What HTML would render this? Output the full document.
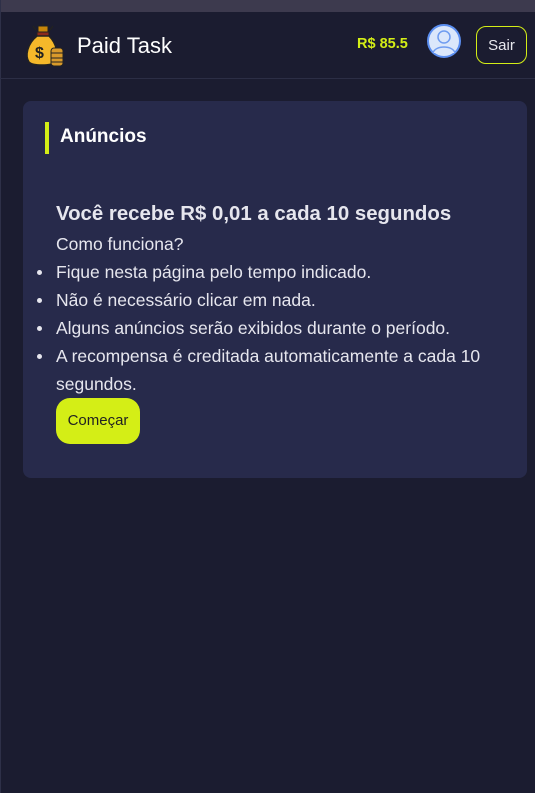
<!DOCTYPE html>
<html><head><meta charset="utf-8"><style>
*{box-sizing:border-box;margin:0;padding:0}
body{width:535px;height:793px;background:#1b1c30;font-family:"Liberation Sans",sans-serif;position:relative;overflow:hidden}
.lb{position:absolute;left:0;top:0;width:1px;height:793px;background:#2e3048}
.top{position:absolute;left:0;top:0;width:535px;height:12px;background:#3d3a4e}
.hdr{position:absolute;left:0;top:12px;width:535px;height:67px;border-bottom:1px solid #2c2e45}
.title{position:absolute;left:77px;top:21px;color:#fff;font-size:22px}
.bal{position:absolute;left:357px;top:24px;color:#d4ee16;font-weight:bold;font-size:14.5px}
.sair{position:absolute;left:476px;top:14px;width:51px;height:38px;border:1px solid #d4ee16;border-radius:10px;color:#e8e8ee;font-size:15px;text-align:center;line-height:38px}
.card{position:absolute;left:23px;top:101px;width:504px;height:377px;background:#272a4b;border-radius:8px}
.bar{position:absolute;left:22px;top:21px;width:4px;height:32px;background:#d4ee16}
.h2{position:absolute;left:37px;top:25px;color:#fff;font-weight:bold;font-size:19px}
.h3{position:absolute;left:33px;top:102px;color:#e6e6ee;font-weight:bold;font-size:20.4px}
.txt{position:absolute;left:33px;top:129px;color:#e6e6ee;font-size:17.5px;line-height:28px;width:460px}
ul{list-style:none}
li{position:relative}
li:before{content:"";position:absolute;left:-19px;top:12px;width:5px;height:5px;border-radius:50%;background:#e6e6ee}
.btn{position:absolute;left:33px;top:297px;width:84px;height:46px;background:#d4ee16;border-radius:14px;color:#222;font-size:15px;text-align:center;line-height:46px}
</style></head><body>
<div class="top"></div>
<div class="lb"></div>
<div class="hdr">
<svg style="position:absolute;left:23px;top:10px" width="44" height="46" viewBox="0 0 44 46">
<g stroke="#222" stroke-width="1.5"><line x1="10" y1="4" x2="13" y2="8"/><line x1="30" y1="4" x2="27" y2="8"/><line x1="20" y1="1" x2="20" y2="4"/></g>
<rect x="15" y="4" width="10" height="6" fill="#c8860a" stroke="#222"/>
<rect x="14" y="10" width="12" height="4" fill="#8b2b1c" stroke="#222"/>
<path d="M14 14 C4 22 2 34 6 40 C10 44 28 44 32 40 C36 34 34 22 26 14Z" fill="#f5b82a" stroke="#222" stroke-width="1.5"/>
<text x="12" y="36" font-size="16" font-weight="bold" fill="#222" font-family="Liberation Sans">$</text>
<rect x="28" y="26" width="12" height="18" rx="3" fill="#d99a2b" stroke="#222"/>
<g stroke="#222"><line x1="28" y1="31" x2="40" y2="31"/><line x1="28" y1="36" x2="40" y2="36"/><line x1="28" y1="40" x2="40" y2="40"/></g>
</svg>
<div class="title">Paid Task</div>
<div class="bal">R$ 85.5</div>
<svg style="position:absolute;left:427px;top:12px" width="34" height="34" viewBox="0 0 34 34">
<circle cx="17" cy="17" r="16" fill="#dbe7fb" stroke="#5b8ef0" stroke-width="2"/>
<circle cx="17" cy="13" r="6" fill="#dbe7fb" stroke="#6f9cf0" stroke-width="1.5"/>
<path d="M6 29 C8 21 26 21 28 29" fill="#dbe7fb" stroke="#6f9cf0" stroke-width="1.5"/>
</svg>
<div class="sair">Sair</div>
</div>
<div class="card">
<div class="bar"></div>
<div class="h2">Anúncios</div>
<div class="h3">Você recebe R$ 0,01 a cada 10 segundos</div>
<div class="txt">Como funciona?
<ul>
<li>Fique nesta página pelo tempo indicado.</li>
<li>Não é necessário clicar em nada.</li>
<li>Alguns anúncios serão exibidos durante o período.</li>
<li>A recompensa é creditada automaticamente a cada 10 segundos.</li>
</ul></div>
<div class="btn">Começar</div>
</div>
</body></html>
